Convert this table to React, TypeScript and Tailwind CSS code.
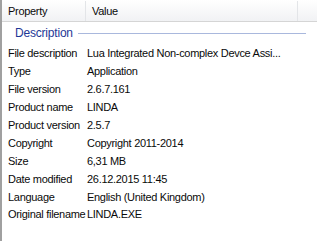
const rows: [string, string][] = [
  ["File description", "Lua Integrated Non-complex Devce Assi..."],
  ["Type", "Application"],
  ["File version", "2.6.7.161"],
  ["Product name", "LINDA"],
  ["Product version", "2.5.7"],
  ["Copyright", "Copyright 2011-2014"],
  ["Size", "6,31 MB"],
  ["Date modified", "26.12.2015 11:45"],
  ["Language", "English (United Kingdom)"],
  ["Original filename", "LINDA.EXE"],
];

export default function App() {
  return (
    <div
      className="w-[317px] h-[241px] bg-white flex text-[11px] tracking-[-0.3px] text-[#0a0a0a] overflow-hidden"
      style={{ fontFamily: '"Liberation Sans", Arial, sans-serif' }}
    >
      <div className="w-[2px] bg-[#a0a0a0] shrink-0" />
      <div className="flex-1 flex flex-col">
        <div className="h-[22px] flex border-b border-[#d5d5d5] bg-gradient-to-b from-white to-[#f1f2f4] pt-[1px]">
          <div className="w-[84px] pl-[6px] flex items-center border-r border-[#e3e5e8]">Property</div>
          <div className="w-[212px] pl-[6px] flex items-center border-r border-[#e3e5e8]">Value</div>
          <div className="flex-1" />
        </div>
        <div className="flex items-center h-[20px] mt-[1px] pl-[13px] pr-[11px] gap-[5px]">
          <span className="text-[12px] tracking-[-0.2px] text-[#1e3796] leading-none">Description</span>
          <div className="flex-1 h-px bg-[#a9b8dd]" />
        </div>
        <div className="flex flex-col pt-[2px]">
          {rows.map(([k, v]) => (
            <div key={k} className="h-[17.9px] flex items-center leading-none">
              <div className="w-[85px] pl-[6px] whitespace-nowrap">{k}</div>
              <div className="whitespace-nowrap">{v}</div>
            </div>
          ))}
        </div>
      </div>
    </div>
  );
}
